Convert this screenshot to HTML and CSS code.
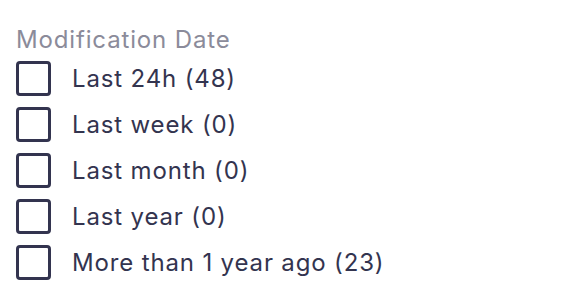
FILE: index.html
```html
<!DOCTYPE html>
<html lang="en">
<head>
    <meta charset="UTF-8">
    <title>Modification Date</title>
    <link rel="stylesheet" href="styles.css">
</head>
<body>
    <div class="filter">
        <div class="filter-title">Modification Date</div>
        <label class="option"><input type="checkbox"><span class="box"></span>Last 24h (48)</label>
        <label class="option"><input type="checkbox"><span class="box"></span>Last week (0)</label>
        <label class="option"><input type="checkbox"><span class="box"></span>Last month (0)</label>
        <label class="option"><input type="checkbox"><span class="box"></span>Last year (0)</label>
        <label class="option"><input type="checkbox"><span class="box"></span>More than 1 year ago (23)</label>
    </div>
</body>
</html>
```

FILE: styles.css
```css
body {
    margin: 0;
    font-family: Inter, 'Noto Sans', sans-serif;
    background: #fff;
}
.filter {
    padding: 24px 16px;
    display: flex;
    flex-direction: column;
}
.filter-title {
    font-size: 24px;
    letter-spacing: 0.85px;
    color: #8b8b9a;
    line-height: 31px;
}
.option {
    display: flex;
    align-items: center;
    gap: 21px;
    height: 46px;
    font-size: 24px;
    letter-spacing: 0.85px;
    color: #33344f;
    cursor: pointer;
}
.option input {
    display: none;
}
.box {
    width: 29px;
    height: 29px;
    border: 3px solid #33344f;
    border-radius: 4px;
}
```
